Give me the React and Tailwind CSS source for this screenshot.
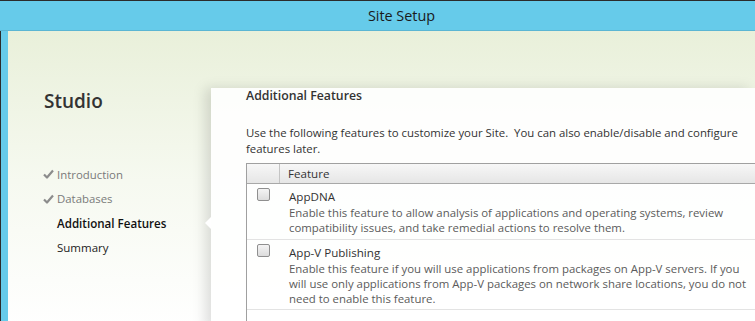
function CheckMark() {
  return (
    <svg width="11" height="10" viewBox="0 0 11 10" className="shrink-0">
      <path d="M1 5.5 L4 8.5 L10 1.5" fill="none" stroke="#8c8c8c" strokeWidth="2.2" strokeLinejoin="round" />
    </svg>
  );
}

function NavItem({ label, done, active }) {
  return (
    <div className="flex items-center h-[24.6px]">
      <div className="w-[14px] flex items-center">{done && <CheckMark />}</div>
      <span
        className={
          active
            ? "text-[11.6px] font-semibold text-[#111]"
            : done
            ? "text-[11.4px] text-[#7a7a7a]"
            : "text-[11.5px] text-[#222]"
        }
      >
        {label}
      </span>
    </div>
  );
}

function Checkbox() {
  return (
    <div className="w-[13px] h-[13px] rounded-[2px] border border-[#8f8f8f] bg-gradient-to-b from-[#f4f4f4] to-[#dcdcdc] shrink-0" />
  );
}

function FeatureRow({ title, lines }) {
  return (
    <div className="flex border-b border-[#e3e3e3] pt-[5px] pb-[3px]">
      <div className="w-[42px] flex justify-start pl-[10px] -mt-[1px]">
        <Checkbox />
      </div>
      <div>
        <div className="text-[11.6px] leading-[16px] text-[#333]">{title}</div>
        {lines.map((l, i) => (
          <div key={i} className="text-[11.4px] leading-[15.3px] text-[#5b5b5b] whitespace-nowrap">
            {l}
          </div>
        ))}
      </div>
    </div>
  );
}

export default function App() {
  return (
    <div
      className="w-[755px] h-[321px] overflow-hidden bg-[#2b2b2b] flex flex-col pt-[1px]"
      style={{ fontFamily: '"Open Sans", "Noto Sans", sans-serif' }}
    >
      {/* Title bar */}
      <div className="h-[30px] bg-[#66cbea] flex items-center justify-center pl-[48px] shrink-0 border-b border-[#5bb6d3]">
        <span className="text-[14.4px] text-[#1a1a1a]">Site Setup</span>
      </div>

      <div className="flex-1 flex pl-[1px] bg-[#2b2b2b]">
        <div className="flex-1 flex border-l-[7px] border-[#66cbea] bg-gradient-to-b from-[#e9f0da] via-[#f6f9f0] to-[#ffffff]">
          {/* Left nav */}
          <div className="w-[203px] shrink-0 pl-[36px] pt-[56px]">
            <div className="text-[19px] font-semibold text-[#333] leading-[28px]">Studio</div>
            <div className="mt-[47px] -ml-[1px]">
              <NavItem label="Introduction" done />
              <NavItem label="Databases" done />
              <NavItem label="Additional Features" active />
              <NavItem label="Summary" />
            </div>
          </div>

          {/* Main panel */}
          <div className="relative flex-1 mt-[57px] bg-white/90 pl-[35px] shadow-[-6px_0_12px_rgba(0,0,0,0.13)]">
            <div className="absolute -left-[6px] top-[129px] w-0 h-0 border-y-[6px] border-y-transparent border-r-[6px] border-r-white" />
            <div className="text-[12.3px] font-semibold text-[#333] leading-[18px] -mt-[1px]">Additional Features</div>
            <div className="mt-[20px] text-[11.4px] leading-[16px] text-[#333] whitespace-nowrap">
              <div>Use the following features to customize your Site.&nbsp; You can also enable/disable and configure</div>
              <div>features later.</div>
            </div>
            <div className="mt-[6px] border-l border-t border-[#a0a0a0]">
              <div className="flex h-[20px] bg-gradient-to-b from-[#f7f7f7] to-[#e6e6e6] border-b border-[#a8a8a8]">
                <div className="w-[33px] border-r border-[#c4c4c4]" />
                <div className="pl-[8px] text-[11.6px] leading-[19px] text-[#333]">Feature</div>
              </div>
              <FeatureRow
                title="AppDNA"
                lines={[
                  "Enable this feature to allow analysis of applications and operating systems, review",
                  "compatibility issues, and take remedial actions to resolve them.",
                ]}
              />
              <FeatureRow
                title="App-V Publishing"
                lines={[
                  "Enable this feature if you will use applications from packages on App-V servers. If you",
                  "will use only applications from App-V packages on network share locations, you do not",
                  "need to enable this feature.",
                ]}
              />
              <div className="h-[20px]" />
            </div>
          </div>
        </div>
      </div>
    </div>
  );
}
